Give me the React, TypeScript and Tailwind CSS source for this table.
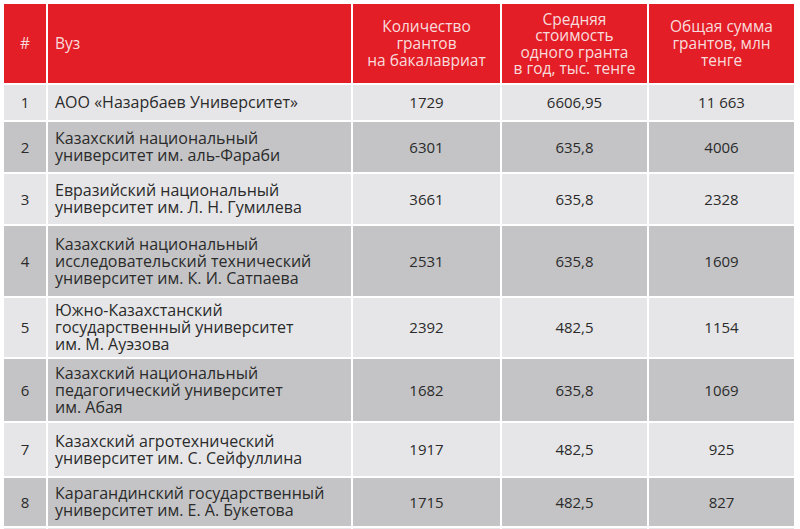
import React from "react";

type Row = {
  n: number;
  name: string[];
  count: string;
  avg: string;
  total: string;
  h: string;
};

const rows: Row[] = [
  { n: 1, name: ["АОО «Назарбаев Университет»"], count: "1729", avg: "6606,95", total: "11 663", h: "h-[35px]" },
  { n: 2, name: ["Казахский национальный", "университет им. аль-Фараби"], count: "6301", avg: "635,8", total: "4006", h: "h-[50px]" },
  { n: 3, name: ["Евразийский национальный", "университет им. Л. Н. Гумилева"], count: "3661", avg: "635,8", total: "2328", h: "h-[50px]" },
  { n: 4, name: ["Казахский национальный", "исследовательский технический", "университет им. К. И. Сатпаева"], count: "2531", avg: "635,8", total: "1609", h: "h-[70px]" },
  { n: 5, name: ["Южно-Казахстанский", "государственный университет", "им. М. Ауэзова"], count: "2392", avg: "482,5", total: "1154", h: "h-[59px]" },
  { n: 6, name: ["Казахский национальный", "педагогический университет", "им. Абая"], count: "1682", avg: "635,8", total: "1069", h: "h-[62px]" },
  { n: 7, name: ["Казахский агротехнический", "университет им. С. Сейфуллина"], count: "1917", avg: "482,5", total: "925", h: "h-[53px]" },
  { n: 8, name: ["Карагандинский государственный", "университет им. Е. А. Букетова"], count: "1715", avg: "482,5", total: "827", h: "h-[48px]" },
];

const font = { fontFamily: '"Open Sans", "Noto Sans", sans-serif' };

export default function App() {
  return (
    <div className="h-[529px] w-[800px] overflow-hidden bg-white pl-[4px] pt-[4px]" style={font}>
      <div className="flex w-[790px] flex-col gap-[2px]">
        {/* header */}
        <div className="flex h-[79px] gap-[2px] text-[15.5px] leading-[17px] text-[#f8dcdc]">
          <div className="flex w-[42px] items-center justify-center bg-[#e41e27]">#</div>
          <div className="flex w-[303px] items-center bg-[#e41e27] pl-[7px]">Вуз</div>
          <div className="flex w-[147px] items-center justify-center bg-[#e41e27] text-center">
            Количество
            <br />
            грантов
            <br />
            на бакалавриат
          </div>
          <div className="flex w-[145px] items-center justify-center bg-[#e41e27] text-center leading-[16.5px]">
            Средняя
            <br />
            стоимость
            <br />
            одного гранта
            <br />
            в год, тыс. тенге
          </div>
          <div className="flex w-[145px] items-center justify-center bg-[#e41e27] text-center">
            Общая сумма
            <br />
            грантов, млн
            <br />
            тенге
          </div>
        </div>

        {rows.map((r, i) => {
          const bg = i % 2 === 0 ? "bg-[#e6e6e8]" : "bg-[#c4c4c6]";
          return (
            <div key={r.n} className={`flex gap-[2px] text-[15px] leading-[17px] text-[#2b2b2b] ${r.h}`}>
              <div className={`flex w-[42px] items-center justify-center ${bg}`}>{r.n}</div>
              <div className={`flex w-[303px] flex-col justify-center pl-[7px] text-[16px] ${bg}`}>
                {r.name.map((l) => (
                  <span key={l}>{l}</span>
                ))}
              </div>
              <div className={`flex w-[147px] items-center justify-center ${bg}`}>{r.count}</div>
              <div className={`flex w-[145px] items-center justify-center ${bg}`}>{r.avg}</div>
              <div className={`flex w-[145px] items-center justify-center ${bg}`}>{r.total}</div>
            </div>
          );
        })}

        {/* next row, cut off at the bottom */}
        <div className="flex h-[40px] gap-[2px]">
          <div className="w-[42px] bg-[#e6e6e8]" />
          <div className="w-[303px] bg-[#e6e6e8]" />
          <div className="w-[147px] bg-[#e6e6e8]" />
          <div className="w-[145px] bg-[#e6e6e8]" />
          <div className="w-[145px] bg-[#e6e6e8]" />
        </div>
      </div>
    </div>
  );
}
